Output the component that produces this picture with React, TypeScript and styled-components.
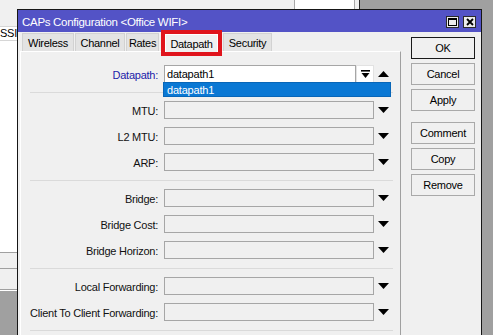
import React from "react";
import styled, { createGlobalStyle, css } from "styled-components";

const Global = createGlobalStyle`
  html, body { margin: 0; padding: 0; }
  body { background: #a0a0a0; font-family: "Liberation Sans", Arial, sans-serif; }
  * { box-sizing: border-box; }
`;

const Desktop = styled.div`
  position: relative;
  width: 493px;
  height: 335px;
  overflow: hidden;
  background: #a0a0a0;
  font-family: "Liberation Sans", Arial, sans-serif;
`;

/* ---------- window behind ---------- */
const BackWindow = styled.div`
  position: absolute;
  left: -80px;
  top: -30px;
  width: 440px;
  height: 322px;
  background: #ffffff;
  border-right: 1px solid #2a2a2a;
  display: flex;
  flex-direction: column;
`;

const BackToolbar = styled.div`
  height: 56px;
  background: #f0f0f0;
  display: flex;
  justify-content: flex-end;
  padding: 18px 4px 0 0;
`;

const BackSearch = styled.div`
  width: 61px;
  height: 22px;
  background: #ffffff;
  border: 1px solid #a8a8a8;
`;

const BackHeader = styled.div`
  display: flex;
  height: 15px;
  background: #ffffff;
  border-top: 1px solid #d6d6d6;
  border-bottom: 1px solid #d6d6d6;
`;

const HeaderCell = styled.div<{ $w: number }>`
  width: ${(p) => p.$w}px;
  padding-left: 5px;
  font-size: 11px;
  letter-spacing: -0.25px;
  line-height: 13px;
  color: #000;
  border-right: 1px solid #d6d6d6;
  white-space: nowrap;
  overflow: hidden;
`;

const BackList = styled.div`
  flex: 1;
  background: #ffffff;
`;

const BackStatus = styled.div<{ $h: number }>`
  height: ${(p) => p.$h}px;
  background: #f0f0f0;
  border-top: 1px solid #a0a0a0;
`;

const BackBottom = styled.div`
  height: 3px;
  border-top: 1px solid #a0a0a0;
  border-bottom: 1px solid #a0a0a0;
  background: #ffffff;
`;

/* ---------- dialog ---------- */
const Dialog = styled.div`
  position: absolute;
  left: 17px;
  top: 9px;
  width: 465px;
  height: 340px;
  border: 1px solid #161616;
  background: #f0f0f0;
  display: flex;
  flex-direction: column;
`;

const TitleBar = styled.div`
  height: 22px;
  background: #5353c6;
  display: flex;
  align-items: center;
  padding: 0 5px 0 4px;
`;

const TitleText = styled.div`
  flex: 1;
  color: #ffffff;
  font-size: 11.5px;
  letter-spacing: -0.3px;
  padding-top: 1px;
`;

const TitleButtons = styled.div`
  display: flex;
  gap: 4px;
  padding-top: 2px;
`;

const TitleButton = styled.div`
  width: 13px;
  height: 12px;
  background: #ececec;
  border: 1px solid #2b2b2b;
  display: flex;
  align-items: center;
  justify-content: center;
`;

const Body = styled.div`
  flex: 1;
  display: flex;
  padding: 0 0 0 2px;
`;

const LeftCol = styled.div`
  width: 381px;
  display: flex;
  flex-direction: column;
`;

const TabBar = styled.div`
  height: 19px;
  display: flex;
  align-items: flex-end;
  gap: 1px;
  padding: 0 0 0 2px;
  position: relative;
  z-index: 2;
`;

const Tab = styled.div<{ $w: number; $active?: boolean }>`
  width: ${(p) => p.$w}px;
  height: 18px;
  display: flex;
  align-items: center;
  justify-content: center;
  background: #e3e3e3;
  border: 1px solid #d2d2d2;
  border-bottom: none;
  font-size: 11px;
  letter-spacing: -0.3px;
  white-space: nowrap;
  color: #000;
  padding-top: 1px;
  ${(p) =>
    p.$active &&
    css`
      background: #f0f0f0;
      border-color: #ffffff;
      margin: 0 4px -1px 5px;
      outline: 4px solid #e0141c;
      position: relative;
      z-index: 3;
    `}
`;

const TabLabel = styled.span`
  display: inline-block;
`;

const Panel = styled.div`
  flex: 1;
  border-top: 1px solid #ffffff;
  border-left: 1px solid #ffffff;
  border-right: 1px solid #a0a0a0;
  padding-top: 5px;
  display: flex;
  flex-direction: column;
`;

const Section = styled.div`
  margin-left: 9px;
  width: 363px;
  padding: 8px 0 9px;
  display: flex;
  flex-direction: column;
  gap: 8px;
  border-bottom: 1px solid #dadada;
`;

const Row = styled.div`
  display: grid;
  grid-template-columns: 134px 210px 19px;
  height: 18px;
  align-items: center;
`;

const Label = styled.div<{ $blue?: boolean }>`
  text-align: right;
  padding-right: 6px;
  font-size: 11px;
  letter-spacing: -0.25px;
  white-space: nowrap;
  color: ${(p) => (p.$blue ? "#1c1ca8" : "#111111")};
  padding-top: 1px;
`;

const Field = styled.div`
  height: 18px;
  border: 1px solid #a6a6a6;
  background: #f0f0f0;
`;

const Combo = styled.div`
  position: relative;
  display: flex;
  height: 18px;
`;

const ComboInput = styled.div`
  width: 192px;
  height: 18px;
  border: 1px solid #a6a6a6;
  background: #ffffff;
  font-size: 11px;
  letter-spacing: -0.2px;
  color: #000;
  padding: 2px 0 0 2px;
`;

const ComboButton = styled.div`
  width: 18px;
  height: 18px;
  background: #ffffff;
  border: 1px solid #e2e2e2;
  display: flex;
  align-items: center;
  justify-content: center;
`;

const DropList = styled.div`
  position: absolute;
  left: -1px;
  top: 17px;
  width: 228px;
  height: 15px;
  background: #0a78d4;
  border: 1px solid #0866b8;
  color: #ffffff;
  font-size: 11px;
  letter-spacing: -0.2px;
  padding: 1px 0 0 3px;
  z-index: 5;
`;

const ArrowCell = styled.div`
  display: flex;
  align-items: center;
  justify-content: center;
`;

const RightCol = styled.div`
  margin-left: 10px;
  padding-top: 5px;
  display: flex;
  flex-direction: column;
  gap: 4px;
`;

const Button = styled.div<{ $default?: boolean; $spaced?: boolean }>`
  width: 64px;
  height: 22px;
  border: 1px solid ${(p) => (p.$default ? "#1a1a1a" : "#a9a9a9")};
  background: #f0f0f0;
  display: flex;
  align-items: center;
  justify-content: center;
  font-size: 11px;
  letter-spacing: -0.25px;
  color: #000;
  margin-top: ${(p) => (p.$spaced ? "7px" : "0")};
`;

const Down = () => (
  <svg width="11" height="6" viewBox="0 0 11 6">
    <polygon points="0,0 11,0 5.5,6" fill="#000" />
  </svg>
);

const Up = () => (
  <svg width="11" height="6" viewBox="0 0 11 6">
    <polygon points="0,6 11,6 5.5,0" fill="#000" />
  </svg>
);

const DropBar = () => (
  <svg width="9" height="9" viewBox="0 0 9 9">
    <rect x="0" y="0" width="9" height="1.6" fill="#000" />
    <polygon points="0.5,3 8.5,3 4.5,8" fill="#000" />
  </svg>
);

type R = { label: string };
const sections: R[][] = [
  [{ label: "MTU:" }, { label: "L2 MTU:" }, { label: "ARP:" }],
  [{ label: "Bridge:" }, { label: "Bridge Cost:" }, { label: "Bridge Horizon:" }],
  [{ label: "Local Forwarding:" }, { label: "Client To Client Forwarding:" }],
];

const tabs = [
  { name: "Wireless", w: 52 },
  { name: "Channel", w: 50 },
  { name: "Rates", w: 33 },
  { name: "Datapath", w: 53, active: true },
  { name: "Security", w: 49 },
];

export default function App() {
  return (
    <>
      <Global />
      <Desktop>
        <BackWindow>
          <BackToolbar>
            <BackSearch />
          </BackToolbar>
          <BackHeader>
            <HeaderCell $w={75}>#</HeaderCell>
            <HeaderCell $w={90}>SSID</HeaderCell>
            <HeaderCell $w={120}>Name</HeaderCell>
          </BackHeader>
          <BackList />
          <BackStatus $h={16} />
          <BackStatus $h={21} />
          <BackBottom />
        </BackWindow>

        <Dialog>
          <TitleBar>
            <TitleText>CAPs Configuration &lt;Office WIFI&gt;</TitleText>
            <TitleButtons>
              <TitleButton>
                <svg width="9" height="8" viewBox="0 0 9 8">
                  <rect x="0.5" y="0.5" width="8" height="7" fill="none" stroke="#000" />
                  <rect x="0" y="0" width="9" height="2" fill="#000" />
                </svg>
              </TitleButton>
              <TitleButton>
                <svg width="8" height="8" viewBox="0 0 8 8">
                  <path d="M1 1 L7 7 M7 1 L1 7" stroke="#000" strokeWidth="1.8" />
                </svg>
              </TitleButton>
            </TitleButtons>
          </TitleBar>
          <Body>
            <LeftCol>
              <TabBar>
                {tabs.map((t) => (
                  <Tab key={t.name} $w={t.w} $active={t.active}>
                    <TabLabel>{t.name}</TabLabel>
                  </Tab>
                ))}
              </TabBar>
              <Panel>
                <Section>
                  <Row>
                    <Label $blue>Datapath:</Label>
                    <Combo>
                      <ComboInput>datapath1</ComboInput>
                      <ComboButton>
                        <DropBar />
                      </ComboButton>
                      <DropList>datapath1</DropList>
                    </Combo>
                    <ArrowCell>
                      <Up />
                    </ArrowCell>
                  </Row>
                </Section>
                {sections.map((rows, i) => (
                  <Section key={i}>
                    {rows.map((r) => (
                      <Row key={r.label}>
                        <Label>{r.label}</Label>
                        <Field />
                        <ArrowCell>
                          <Down />
                        </ArrowCell>
                      </Row>
                    ))}
                  </Section>
                ))}
              </Panel>
            </LeftCol>
            <RightCol>
              <Button $default>OK</Button>
              <Button>Cancel</Button>
              <Button>Apply</Button>
              <Button $spaced>Comment</Button>
              <Button>Copy</Button>
              <Button>Remove</Button>
            </RightCol>
          </Body>
        </Dialog>
      </Desktop>
    </>
  );
}
